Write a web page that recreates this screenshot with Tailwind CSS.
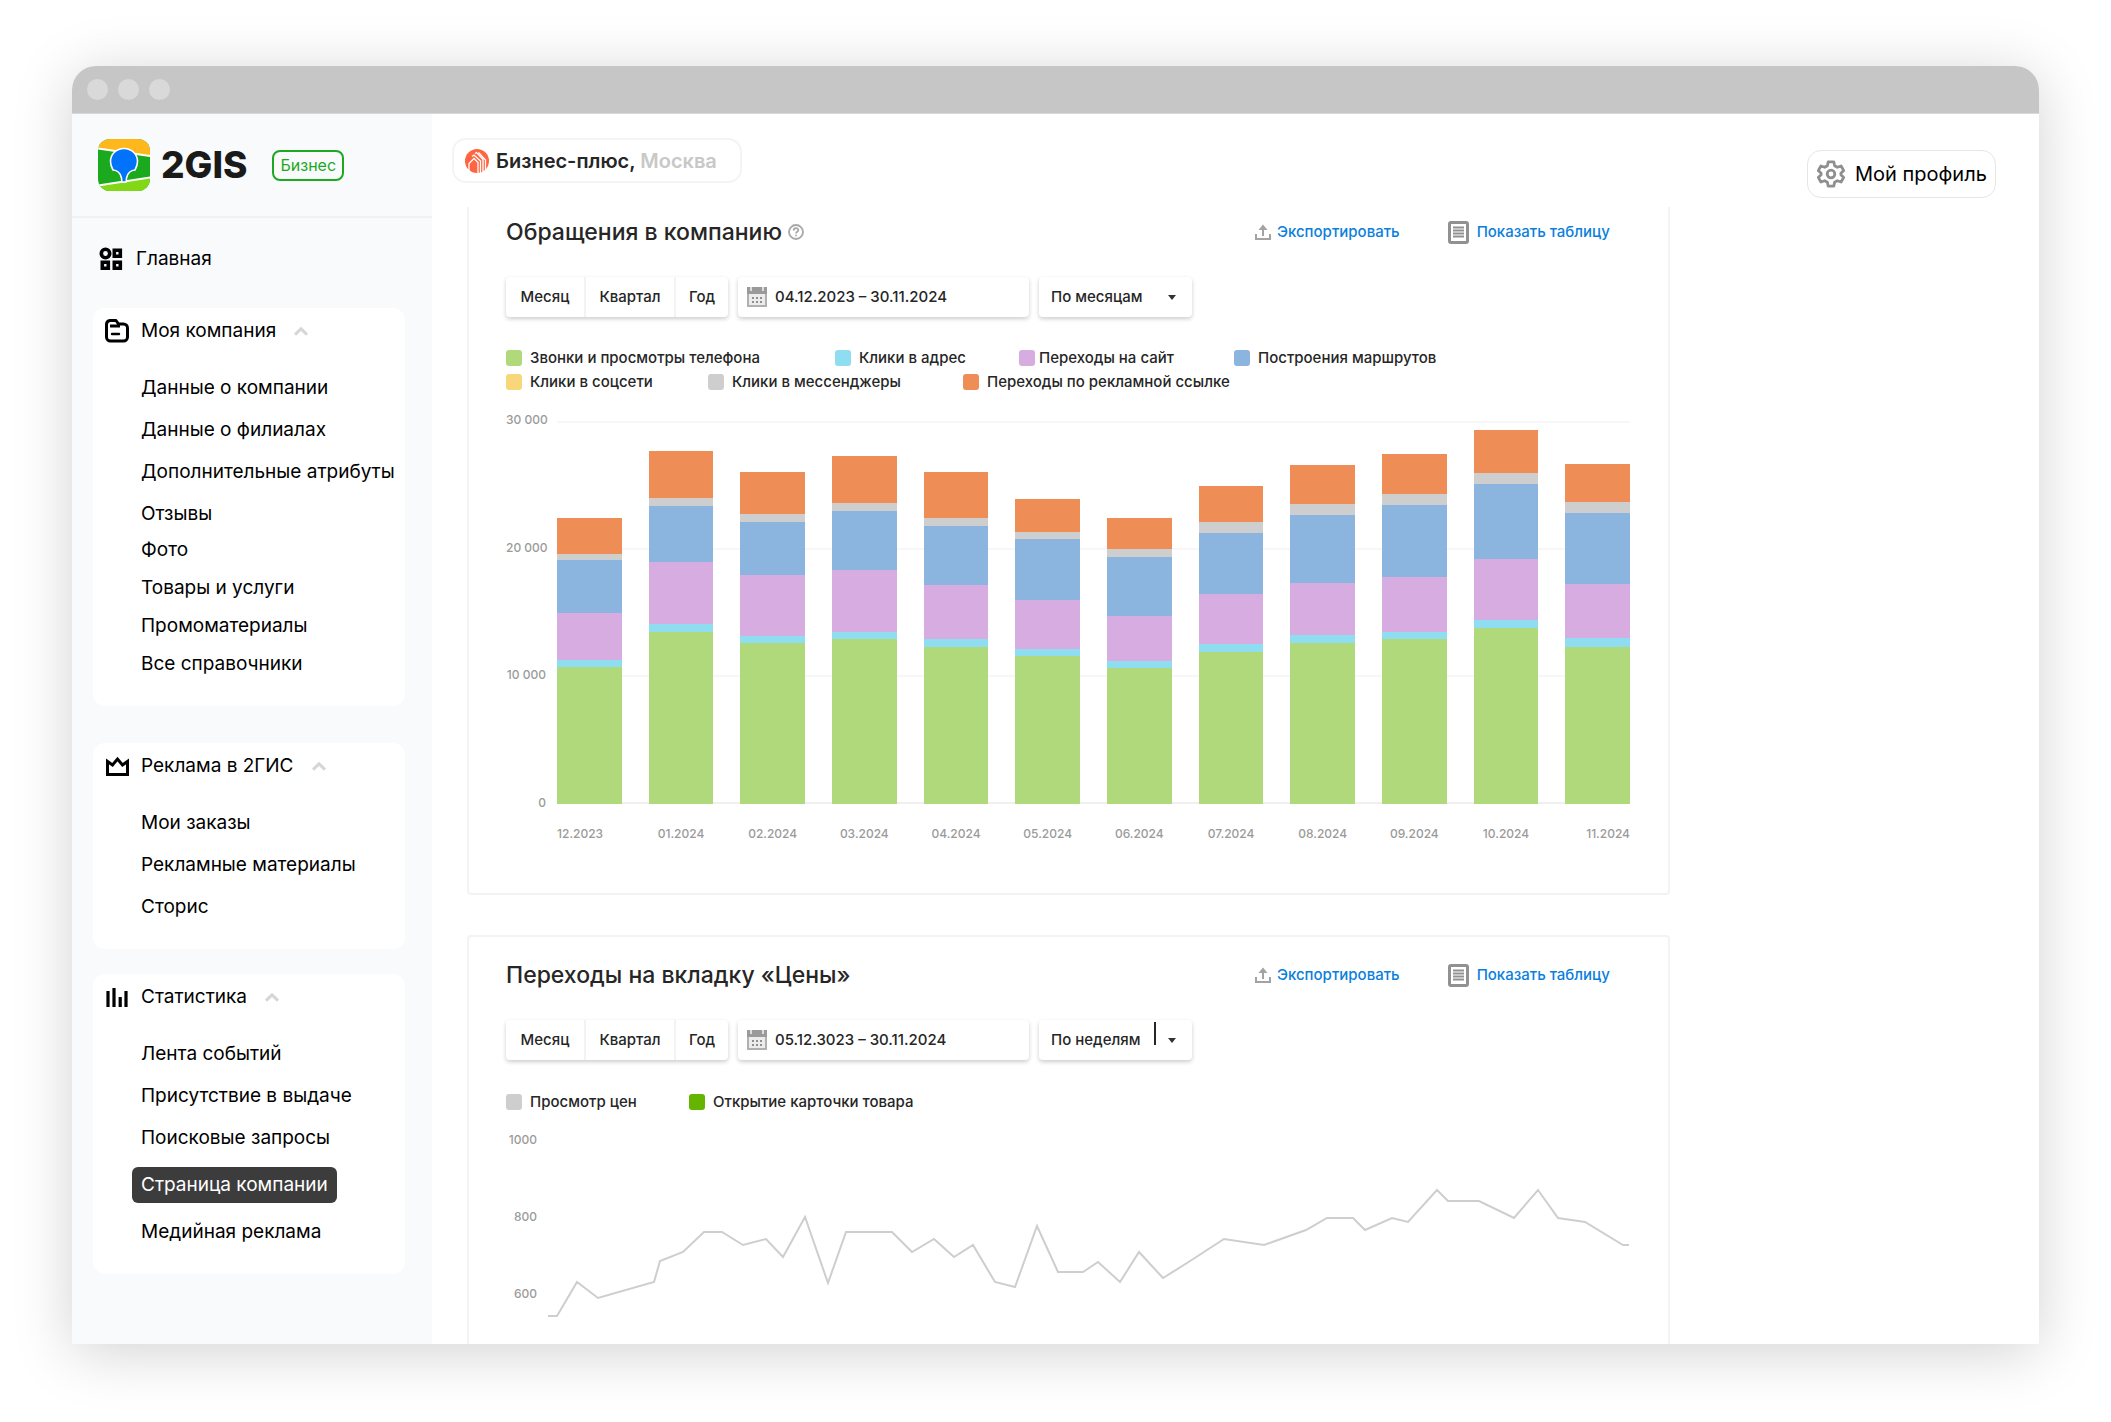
<!DOCTYPE html>
<html lang="ru">
<head>
<meta charset="utf-8">
<title>2GIS Бизнес — Страница компании</title>
<script src="https://cdn.jsdelivr.net/npm/@tailwindcss/browser@4"></script>
</head>
<body class="bg-white font-['Inter','Noto_Sans',sans-serif] text-black">
<svg class="hidden" aria-hidden="true">
  <symbol id="chevron" viewBox="0 0 14 9"><path d="M1 7.6 7 1.8l6 5.8" fill="none" stroke="#d6d6d6" stroke-width="3"/></symbol>
  <symbol id="export" viewBox="0 0 16 16"><path d="M1 10v5h14v-5M8 12V3" fill="none" stroke="#a3a3a3" stroke-width="2"/><path d="M3.5 6 8 .5 12.500 6z" fill="#a3a3a3"/></symbol>
  <symbol id="sheet" viewBox="0 0 21 23"><rect x="1.500" y="1.500" width="18" height="20" rx="1.500" fill="#fff" stroke="#919191" stroke-width="3"/><path d="M5 6.500h11M5 9.500h11M5 12.500h11M5 15.500h11" stroke="#919191" stroke-width="1.800"/></symbol>
  <symbol id="calendar" viewBox="0 0 20 20"><path d="M1 1h18v18H1z" fill="#ececec" stroke="#b0b0b0" stroke-width="2"/><path d="M0 0h20v7H0z" fill="#9a9a9a"/><path d="M4 0v4M16 0v4" stroke="#ddd" stroke-width="2"/><path d="M5 11h2m2 0h2m2 0h2M5 15h2m2 0h2m2 0h2" stroke="#8f8f8f" stroke-width="2"/></symbol>
</svg>

<div class="flex h-screen flex-col px-[72px] pt-[66px] pb-[78px]">
  <div class="flex min-h-0 flex-1 flex-col overflow-hidden rounded-t-[24px] bg-white shadow-[0_8px_60px_rgba(0,0,0,0.18)]">
    <div class="flex h-12 shrink-0 items-center gap-[10px] border-b border-[#d9d9d9] bg-[#c6c6c6] pl-[15px]">
      <span class="size-[21px] rounded-full bg-[#d9d9d9]"></span>
      <span class="size-[21px] rounded-full bg-[#d9d9d9]"></span>
      <span class="size-[21px] rounded-full bg-[#d9d9d9]"></span>
    </div>

    <div class="flex min-h-0 flex-1">
      <aside class="w-[360px] shrink-0 bg-[#f9fafc]">
        <div class="flex h-[104px] items-center border-b-2 border-[#f0f1f3] pl-[26px]">
          <svg class="size-[52px]" viewBox="0 0 52 52" aria-hidden="true">
            <defs><clipPath id="tile"><rect width="52" height="52" rx="12"/></clipPath></defs>
            <g clip-path="url(#tile)">
              <path d="M0 0h52v52H0z" fill="#1baa1e"/>
              <path d="M0 0h52v17L0 9.500z" fill="#ffb81c"/>
              <path d="M0 46.500 52 39v13H0z" fill="#82d816"/>
              <path d="M0 9.500 52 17M0 46.500 52 38.500" stroke="#fff" stroke-width="1.800"/>
              <path d="M26 9.500c7.600 0 13.500 5.800 13.500 13 0 3-1 5.800-2.500 8.500-3.800.2-7.500 3-8.500 8l-.4 4h-4.200l-.4-4c-1-5-4.700-7.800-8.500-8-1.500-2.700-2.500-5.500-2.500-8.500 0-7.200 5.900-13 13.500-13z" fill="#0073fa" stroke="#fff" stroke-width="1.600"/>
            </g>
          </svg>
          <span class="ml-[11px] text-[37px] leading-10 font-extrabold text-[#1a1a1a]">2GIS</span>
          <span class="ml-[25px] flex h-[31px] items-center rounded-lg border-2 border-[#1baa1e] px-[6px] text-base text-[#1baa1e]">Бизнес</span>
        </div>

        <nav class="text-[19px] leading-6">
          <a href="#" class="mt-5 flex h-[42px] items-center gap-[13px] pl-[27px]">
            <svg class="size-6" viewBox="0 0 24 24" fill="none" stroke="#000" stroke-width="3.600" aria-hidden="true"><circle cx="6.500" cy="6.500" r="4.200"/><path d="M15.300 3.300h6v6h-6zM3.300 15.300h6v6h-6zM15.300 15.300h6v6h-6z"/></svg>
            Главная
          </a>

          <section class="mr-[27px] ml-[21px] mt-7 rounded-xl bg-white pb-[23px]">
            <button class="flex h-[46px] items-center pl-3">
              <svg class="size-6" viewBox="0 0 24 24" fill="none" stroke="#000" stroke-width="3" aria-hidden="true"><path d="M1.500 5.500a4 4 0 0 1 3.500-4h6l2.500 3.500h5a4 4 0 0 1 4 4v9a4 4 0 0 1-4 4h-13a4 4 0 0 1-4-4zM5 7h10" stroke-linejoin="round"/><path d="M7 15h7" stroke-width="2.400" stroke-linecap="round"/></svg>
              <span class="ml-3">Моя компания</span>
              <svg class="ml-[18px] h-[9px] w-[14px]"><use href="#chevron"/></svg>
            </button>
            <ul class="mt-[13px] pl-12 whitespace-nowrap">
              <li class="flex h-[42px] items-center"><a href="#">Данные о компании</a></li>
              <li class="flex h-[42px] items-center"><a href="#">Данные о филиалах</a></li>
              <li class="flex h-[42px] items-center"><a href="#">Дополнительные атрибуты</a></li>
              <li class="flex h-[42px] items-center"><a href="#">Отзывы</a></li>
            </ul>
            <ul class="-mt-1 pl-12">
              <li class="flex h-[38px] items-center"><a href="#">Фото</a></li>
              <li class="flex h-[38px] items-center"><a href="#">Товары и услуги</a></li>
              <li class="flex h-[38px] items-center"><a href="#">Промоматериалы</a></li>
              <li class="flex h-[38px] items-center"><a href="#">Все справочники</a></li>
            </ul>
          </section>

          <section class="mr-[27px] ml-[21px] mt-[37px] rounded-xl bg-white pb-[21px]">
            <button class="flex h-[46px] items-center pl-3">
              <svg class="size-6" viewBox="0 0 24 24" fill="none" stroke="#000" stroke-width="3" aria-hidden="true"><path d="M2.500 20.500h20V7.500l-5 3.500-5-6L7.500 11l-5-3.500z"/></svg>
              <span class="ml-3">Реклама в 2ГИС</span>
              <svg class="ml-[18px] h-[9px] w-[14px]"><use href="#chevron"/></svg>
            </button>
            <ul class="mt-[13px] pl-12">
              <li class="flex h-[42px] items-center"><a href="#">Мои заказы</a></li>
              <li class="flex h-[42px] items-center"><a href="#">Рекламные материалы</a></li>
              <li class="flex h-[42px] items-center"><a href="#">Сторис</a></li>
            </ul>
          </section>

          <section class="mr-[27px] ml-[21px] mt-[25px] rounded-xl bg-white pb-[21px]">
            <button class="flex h-[46px] items-center pl-3">
              <svg class="size-6" viewBox="0 0 24 24" fill="none" stroke="#000" stroke-width="3.200" aria-hidden="true"><path d="M3 6v16M9 3v19M15.200 12v10M21 6v16"/></svg>
              <span class="ml-3">Статистика</span>
              <svg class="ml-[18px] h-[9px] w-[14px]"><use href="#chevron"/></svg>
            </button>
            <ul class="mt-[13px] pl-12">
              <li class="flex h-[42px] items-center"><a href="#">Лента событий</a></li>
              <li class="flex h-[42px] items-center"><a href="#">Присутствие в выдаче</a></li>
              <li class="flex h-[42px] items-center"><a href="#">Поисковые запросы</a></li>
              <li class="my-2 -ml-[9px] flex"><a href="#" class="flex h-9 items-center rounded-md bg-[#3c3c3c] px-[9px] text-white">Страница компании</a></li>
              <li class="flex h-[42px] items-center"><a href="#">Медийная реклама</a></li>
            </ul>
          </section>
        </nav>
      </aside>

      <main class="min-w-0 flex-1 overflow-hidden">
        <header class="flex h-[93px] items-start justify-between pr-[43px] pl-5">
          <button class="mt-6 flex h-[45px] w-[290px] items-center rounded-[14px] border-2 border-[#f4f4f4] pl-[11px] text-[20px] leading-6 font-semibold whitespace-nowrap text-[#262626]">
            <svg class="size-6" viewBox="0 0 24 24" aria-hidden="true"><circle cx="12" cy="12" r="12" fill="#ff6540"/><path d="M4 22V14.500l5-5 4 4V24M7 7.500l2-1.500 6.500 6V24M10 4.500l1.500-1L18 10.500V23M13.500 3.500 20.500 11v10" fill="none" stroke="#fff" stroke-width="1.300"/></svg>
            <span class="ml-[7px]">Бизнес-плюс, <span class="text-[#c8c8c8]">Москва</span></span>
          </button>
          <button class="mt-9 flex h-12 w-[189px] items-center rounded-[14px] border border-[#e6e6e6] pl-[9px] text-[20px] leading-6 whitespace-nowrap">
            <svg class="size-7" viewBox="0 0 28 28" fill="none" stroke="#8f8f8f" stroke-width="2.800" stroke-linejoin="round" aria-hidden="true"><path d="M11.200 1.800h5.600l.8 3.900 2.700 1.600 3.800-1.300 2.600 4.600-2.800 2.700v1.400l2.800 2.700-2.600 4.600-3.800-1.300-2.700 1.600-.8 3.900h-5.600l-.8-3.900-2.700-1.600-3.800 1.300-2.600-4.600 2.800-2.700v-1.400l-2.800-2.700L3.900 6l3.800 1.300 2.700-1.600z"/><circle cx="14" cy="14" r="3.800"/></svg>
            <span class="ml-[10px]">Мой профиль</span>
          </button>
        </header>

        <section class="mr-[369px] ml-[35px] rounded-b-sm border-2 border-t-0 border-[#f3f3f3] pt-[10px] pr-[38px] pb-[50px] pl-[37px] text-[#262626]">
          <div class="flex h-[30px] items-center">
            <h2 class="text-[23px] leading-[30px] font-medium whitespace-nowrap">Обращения в компанию</h2>
            <svg class="ml-[6px] size-4" viewBox="0 0 16 16" fill="none" stroke="#a8a8a8" stroke-width="1.800" role="img" aria-label="Справка"><circle cx="8" cy="8" r="7"/><path d="M5.700 6.500c0-3 4.600-3 4.600-.3 0 1.600-2.300 1.600-2.300 3.400M8 10.700v1.600"/></svg>
            <div class="mr-5 ml-auto flex items-center text-[15px] leading-5 font-medium whitespace-nowrap text-[#0a7fdc]">
              <a href="#" class="flex items-center gap-[6px]"><svg class="size-4"><use href="#export"/></svg>Экспортировать</a>
              <a href="#" class="ml-12 flex items-center gap-2"><svg class="h-[23px] w-[21px]"><use href="#sheet"/></svg>Показать таблицу</a>
            </div>
          </div>

          <div class="mt-[30px] flex h-10 gap-[10px] text-[15px] leading-5 font-medium">
            <div class="flex w-[222px] divide-x-2 divide-[#f3f3f3] rounded-sm bg-white shadow-[0_2px_4px_rgba(0,0,0,0.2)]">
              <button class="w-20">Месяц</button>
              <button class="w-[90px]">Квартал</button>
              <button class="flex-1">Год</button>
            </div>
            <label class="flex w-[291px] items-center gap-2 rounded-sm bg-white pl-[9px] shadow-[0_2px_4px_rgba(0,0,0,0.2)]">
              <svg class="size-5 shrink-0" role="img" aria-label="Период"><use href="#calendar"/></svg>
              <input type="text" value="04.12.2023 – 30.11.2024" class="w-full outline-none">
            </label>
            <div class="relative w-[153px] rounded-sm bg-white shadow-[0_2px_4px_rgba(0,0,0,0.2)]">
              <select aria-label="Группировка обращений" class="h-full w-full appearance-none pl-3 outline-none"><option>По месяцам</option><option>По неделям</option></select>
              <svg class="pointer-events-none absolute top-[18px] right-4 h-[5px] w-2" viewBox="0 0 8 5"><path d="M0 0h8L4 5z" fill="#333"/></svg>
            </div>
          </div>

          <div class="mt-[29px] text-[15px] leading-6 font-medium whitespace-nowrap">
            <ul class="grid grid-cols-[329px_184px_215px_auto]">
              <li class="flex items-center gap-2"><i class="size-4 rounded-[3px] bg-[#afd97a]"></i>Звонки и просмотры телефона</li>
              <li class="flex items-center gap-2"><i class="size-4 rounded-[3px] bg-[#8eddf0]"></i>Клики в адрес</li>
              <li class="flex items-center gap-1"><i class="size-4 rounded-[3px] bg-[#d6ace1]"></i>Переходы на сайт</li>
              <li class="flex items-center gap-2"><i class="size-4 rounded-[3px] bg-[#8bb4df]"></i>Построения маршрутов</li>
            </ul>
            <ul class="grid grid-cols-[202px_255px_auto]">
              <li class="flex items-center gap-2"><i class="size-4 rounded-[3px] bg-[#f8d77a]"></i>Клики в соцсети</li>
              <li class="flex items-center gap-2"><i class="size-4 rounded-[3px] bg-[#cecece]"></i>Клики в мессенджеры</li>
              <li class="flex items-center gap-2"><i class="size-4 rounded-[3px] bg-[#ee8e56]"></i>Переходы по рекламной ссылке</li>
            </ul>
          </div>

          <div class="mt-[27px] flex gap-[11px] text-[12px] leading-[18px] font-medium text-[#9a9a9a]">
            <div class="-mt-[10px] flex h-[401px] w-10 flex-col justify-between text-right whitespace-nowrap">
              <span>30 000</span><span>20 000</span><span>10 000</span><span>0</span>
            </div>
            <div class="min-w-0 flex-1">
              <div class="relative h-[383px]">
                <div class="absolute inset-0 flex flex-col justify-between">
                  <i class="h-[2px] bg-[#f7f7f7]"></i><i class="h-[2px] bg-[#f7f7f7]"></i><i class="h-[2px] bg-[#f7f7f7]"></i><i class="h-[2px] bg-[#f0f0f0]"></i>
                </div>
                <div id="bars" class="relative grid h-full grid-cols-12 gap-x-[27px]"></div>
              </div>
              <div id="months" class="mt-[21px] grid grid-cols-12 gap-x-[27px] text-center"></div>
            </div>
          </div>
        </section>

        <section class="mt-10 mr-[369px] ml-[35px] h-[600px] rounded-t-sm border-2 border-[#f3f3f3] pt-[23px] pr-[38px] pl-[37px] text-[#262626]">
          <div class="flex h-[30px] items-center">
            <h2 class="text-[23px] leading-[30px] font-medium whitespace-nowrap">Переходы на вкладку «Цены»</h2>
            <div class="mr-5 ml-auto flex items-center text-[15px] leading-5 font-medium whitespace-nowrap text-[#0a7fdc]">
              <a href="#" class="flex items-center gap-[6px]"><svg class="size-4"><use href="#export"/></svg>Экспортировать</a>
              <a href="#" class="ml-12 flex items-center gap-2"><svg class="h-[23px] w-[21px]"><use href="#sheet"/></svg>Показать таблицу</a>
            </div>
          </div>

          <div class="mt-[30px] flex h-10 gap-[10px] text-[15px] leading-5 font-medium">
            <div class="flex w-[222px] divide-x-2 divide-[#f3f3f3] rounded-sm bg-white shadow-[0_2px_4px_rgba(0,0,0,0.2)]">
              <button class="w-20">Месяц</button>
              <button class="w-[90px]">Квартал</button>
              <button class="flex-1">Год</button>
            </div>
            <label class="flex w-[291px] items-center gap-2 rounded-sm bg-white pl-[9px] shadow-[0_2px_4px_rgba(0,0,0,0.2)]">
              <svg class="size-5 shrink-0" role="img" aria-label="Период"><use href="#calendar"/></svg>
              <input type="text" value="05.12.3023 – 30.11.2024" class="w-full outline-none">
            </label>
            <div class="relative w-[153px] rounded-sm bg-white shadow-[0_2px_4px_rgba(0,0,0,0.2)]">
              <select aria-label="Группировка переходов" class="h-full w-full appearance-none pl-3 outline-none"><option>По неделям</option><option>По месяцам</option></select>
              <i class="absolute top-[2px] right-9 h-[23px] w-[2px] bg-[#262626]"></i>
              <svg class="pointer-events-none absolute top-[18px] right-4 h-[5px] w-2" viewBox="0 0 8 5"><path d="M0 0h8L4 5z" fill="#333"/></svg>
            </div>
          </div>

          <ul class="mt-[30px] grid grid-cols-[183px_auto] text-[15px] leading-6 font-medium whitespace-nowrap">
            <li class="flex items-center gap-2"><i class="size-4 rounded-[3px] bg-[#cecece]"></i>Просмотр цен</li>
            <li class="flex items-center gap-2"><i class="size-4 rounded-[3px] bg-[#64b400]"></i>Открытие карточки товара</li>
          </ul>

          <div class="mt-4 flex gap-[11px]">
            <div class="mt-px flex w-[31px] flex-col gap-[59px] text-right text-[12px] leading-[18px] font-medium text-[#9a9a9a]">
              <span>1000</span><span>800</span><span>600</span>
            </div>
            <svg class="h-[200px] min-w-0 flex-1" viewBox="548 1130 1082 200" preserveAspectRatio="none" role="img" aria-label="Просмотр цен">
              <polyline fill="none" stroke="#cecece" stroke-width="2" vector-effect="non-scaling-stroke" points="548,1316 557,1316 577,1282 598,1298 654,1282 660,1261 683,1252 704,1232 722,1232 743,1245 766,1239 783,1257 805,1217 828,1283 846,1232 892,1232 912,1252 934,1239 954,1257 973,1245 995,1282 1015,1287 1037,1226 1058,1272 1083,1272 1098,1262 1120,1282 1139,1252 1163,1278 1187,1263 1224,1239 1264,1245 1306,1230 1327,1218 1353,1218 1365,1230 1392,1218 1408,1222 1437,1190 1448,1201 1479,1201 1514,1218 1538,1190 1558,1218 1585,1222 1623,1245 1629,1245"/>
            </svg>
          </div>
        </section>
      </main>
    </div>
  </div>
</div>

<script>
  // Segment sizes from bottom to top; AXIS is the height of the 30 000 mark in the same units.
  const AXIS = 1150;
  const COLORS = ['bg-[#afd97a]', 'bg-[#8eddf0]', 'bg-[#d6ace1]', 'bg-[#8bb4df]', 'bg-[#cecece]', 'bg-[#ee8e56]'];
  const DATA = [
    ['12.2023', [410, 21, 144, 159, 17, 107]],
    ['01.2024', [517, 24, 187, 166, 25, 140]],
    ['02.2024', [484, 22, 182, 160, 22, 127]],
    ['03.2024', [496, 22, 184, 177, 25, 142]],
    ['04.2024', [472, 23, 163, 177, 24, 137]],
    ['05.2024', [443, 23, 147, 183, 21, 99]],
    ['06.2024', [408, 21, 135, 179, 23, 92]],
    ['07.2024', [456, 23, 152, 184, 31, 108]],
    ['08.2024', [484, 23, 157, 205, 31, 117]],
    ['09.2024', [496, 22, 165, 216, 31, 121]],
    ['10.2024', [529, 24, 182, 227, 31, 129]],
    ['11.2024', [472, 26, 164, 211, 35, 114]],
  ];
  const bars = document.getElementById('bars');
  const months = document.getElementById('months');
  DATA.forEach(([month, parts], i) => {
    const bar = document.createElement('div');
    bar.className = 'flex h-full flex-col-reverse';
    parts.forEach((value, k) => {
      const part = document.createElement('div');
      part.className = 'shrink-0 ' + COLORS[k];
      part.style.height = (value / AXIS * 100) + '%';
      bar.append(part);
    });
    bars.append(bar);
    const label = document.createElement('span');
    label.textContent = month;
    if (i === 0) label.className = 'text-left';
    if (i === DATA.length - 1) label.className = 'text-right';
    months.append(label);
  });
</script>
</body>
</html>
